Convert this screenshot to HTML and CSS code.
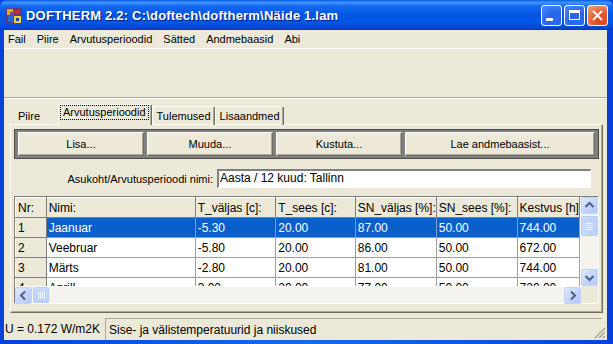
FILE: index.html
```html
<!DOCTYPE html>
<html lang="et">

<head>
    <meta charset="UTF-8">
    <title>DOFTHERM 2.2</title>
    <link rel="stylesheet" href="styles.css">
</head>

<body>
    <div class="window">
        <!-- Pealkirjariba -->
        <div class="titlebar">
            <svg class="app-icon" width="16" height="16" viewBox="0 0 16 16">
                <rect x="0" y="0" width="16" height="16" fill="#5a3a86"/>
                <rect x="1" y="1" width="6" height="6" fill="#d8b020"/>
                <rect x="8" y="2" width="6" height="4" fill="#c03030"/>
                <rect x="2" y="8" width="5" height="6" fill="#2a6ad8"/>
                <rect x="8" y="8" width="7" height="7" fill="#e8d040"/>
                <rect x="10" y="10" width="3" height="3" fill="#2040a0"/>
                <rect x="4" y="4" width="4" height="4" fill="#7a3ab0"/>
            </svg>
            <span class="title">DOFTHERM 2.2: C:\doftech\doftherm\Näide 1.lam</span>
            <div class="caption-buttons">
                <div class="cap-btn">
                    <svg width="21" height="21" viewBox="0 0 21 21"><rect x="5" y="13" width="7" height="3" fill="#fff"/></svg>
                </div>
                <div class="cap-btn">
                    <svg width="21" height="21" viewBox="0 0 21 21"><rect x="5.5" y="5.5" width="10" height="9" fill="none" stroke="#fff"/><rect x="5" y="5" width="11" height="3" fill="#fff"/></svg>
                </div>
                <div class="cap-btn close">
                    <svg width="21" height="21" viewBox="0 0 21 21"><path d="M6 6 L15 15 M15 6 L6 15" stroke="#fff" stroke-width="2"/></svg>
                </div>
            </div>
        </div>

        <div class="client">
            <!-- Menüü -->
            <div class="menubar">
                <span>Fail</span>
                <span>Piire</span>
                <span>Arvutusperioodid</span>
                <span>Sätted</span>
                <span>Andmebaasid</span>
                <span>Abi</span>
            </div>

            <!-- Tööriistariba (tühi) -->
            <div class="toolbar"></div>

            <!-- Vahelehed -->
            <div class="tabs-area">
                <div class="tabs">
                    <div class="tab first">Piire</div>
                    <div class="tab active"><span class="focus">Arvutusperioodid</span></div>
                    <div class="tab">Tulemused</div>
                    <div class="tab">Lisaandmed</div>
                </div>

                <div class="tab-page">
                    <div class="button-panel">
                        <div class="btn w126">Lisa...</div>
                        <div class="btn w126">Muuda...</div>
                        <div class="btn w126">Kustuta...</div>
                        <div class="btn wide">Lae andmebaasist...</div>
                    </div>

                    <div class="name-row">
                        <span class="name-label">Asukoht/Arvutusperioodi nimi:</span>
                        <div class="text-input">Aasta / 12 kuud: Tallinn</div>
                    </div>

                    <div class="grid">
                        <div class="grid-main">
                            <div class="grid-cells">
                                <table>
                                    <tr class="head">
                                        <td class="fixed c-nr">Nr:</td>
                                        <td class="c-name">Nimi:</td>
                                        <td class="c-81">T_väljas [c]:</td>
                                        <td class="c-80">T_sees [c]:</td>
                                        <td class="c-81">SN_väljas [%]:</td>
                                        <td class="c-81">SN_sees [%]:</td>
                                        <td class="c-last">Kestvus [h]</td>
                                    </tr>
                                    <tr class="selected">
                                        <td class="fixed">1</td>
                                        <td>Jaanuar</td>
                                        <td>-5.30</td>
                                        <td>20.00</td>
                                        <td>87.00</td>
                                        <td>50.00</td>
                                        <td>744.00</td>
                                    </tr>
                                    <tr>
                                        <td class="fixed">2</td>
                                        <td>Veebruar</td>
                                        <td>-5.80</td>
                                        <td>20.00</td>
                                        <td>86.00</td>
                                        <td>50.00</td>
                                        <td>672.00</td>
                                    </tr>
                                    <tr>
                                        <td class="fixed">3</td>
                                        <td>Märts</td>
                                        <td>-2.80</td>
                                        <td>20.00</td>
                                        <td>81.00</td>
                                        <td>50.00</td>
                                        <td>744.00</td>
                                    </tr>
                                    <tr>
                                        <td class="fixed">4</td>
                                        <td>Aprill</td>
                                        <td>3.00</td>
                                        <td>20.00</td>
                                        <td>77.00</td>
                                        <td>50.00</td>
                                        <td>720.00</td>
                                    </tr>
                                </table>
                            </div>
                            <div class="vscroll">
                                <div class="sb-btn">
                                    <svg width="17" height="17" viewBox="0 0 17 17"><path d="M4.5 10 L8.5 6 L12.5 10" fill="none" stroke="#4d6185" stroke-width="2"/></svg>
                                </div>
                                <div class="sb-thumb-v">
                                    <svg width="15" height="20" viewBox="0 0 15 20"><path d="M4 7.5h7M4 9.5h7M4 11.5h7M4 13.5h7" stroke="#eef4fe" stroke-width="1"/></svg>
                                </div>
                                <div class="sb-track"></div>
                                <div class="sb-btn">
                                    <svg width="17" height="17" viewBox="0 0 17 17"><path d="M4.5 7 L8.5 11 L12.5 7" fill="none" stroke="#4d6185" stroke-width="2"/></svg>
                                </div>
                            </div>
                        </div>
                        <div class="hscroll-row">
                            <div class="hscroll">
                                <div class="sb-btn">
                                    <svg width="17" height="17" viewBox="0 0 17 17"><path d="M10 4.5 L6 8.5 L10 12.5" fill="none" stroke="#4d6185" stroke-width="2"/></svg>
                                </div>
                                <div class="sb-thumb-h">
                                    <svg width="16" height="15" viewBox="0 0 16 15"><path d="M5.5 4v7M7.5 4v7M9.5 4v7M11.5 4v7" stroke="#eef4fe" stroke-width="1"/></svg>
                                </div>
                                <div class="sb-track"></div>
                                <div class="sb-btn">
                                    <svg width="17" height="17" viewBox="0 0 17 17"><path d="M7 4.5 L11 8.5 L7 12.5" fill="none" stroke="#4d6185" stroke-width="2"/></svg>
                                </div>
                            </div>
                            <div class="sb-corner"></div>
                        </div>
                    </div>
                </div>
            </div>

            <!-- Olekuriba -->
            <div class="statusbar">
                <div class="panel p1">U = 0.172 W/m2K</div>
                <div class="panel p2">Sise- ja välistemperatuurid ja niiskused</div>
                <svg class="grip" width="12" height="12" viewBox="0 0 12 12">
                    <path d="M11 1 L1 11 M11 5 L5 11 M11 9 L9 11" stroke="#aca899" stroke-width="1.5"/>
                </svg>
            </div>
        </div>
    </div>
</body>

</html>
```

FILE: styles.css
```css
/* Üldine */
body {
    margin: 0;
    width: 613px;
    height: 344px;
    overflow: hidden;
    font-family: "Liberation Sans", Arial, sans-serif;
    font-size: 11px;
    color: #000;
    background: #0831d9;
}

.window {
    display: flex;
    flex-direction: column;
    height: 344px;
    background: linear-gradient(to right, #0841d9, #166aee 50%, #0841d9);
}

/* Pealkirjariba */
.titlebar {
    height: 30px;
    display: flex;
    align-items: center;
    padding: 0 5px 0 6px;
    background: linear-gradient(to bottom, #0a5fe6 0%, #3e95ff 9%, #1569f0 20%, #0458e6 45%, #0355e3 75%, #0348d0 92%, #0237b8 100%);
    border-radius: 7px 7px 0 0;
}

.app-icon {
    flex: none;
    margin-top: 1px;
}

.title {
    margin-left: 4px;
    font-weight: bold;
    font-size: 13px;
    letter-spacing: 0.2px;
    color: #fff;
    text-shadow: 1px 1px 0 #0a1d7e;
    white-space: nowrap;
}

.caption-buttons {
    margin-left: auto;
    display: flex;
    gap: 2px;
    margin-top: 1px;
}

.cap-btn {
    width: 21px;
    height: 21px;
    box-sizing: border-box;
    border: 1px solid #fff;
    border-radius: 3px;
    background: radial-gradient(circle at 70% 80%, #2a6ef5 0%, #2663e8 40%, #4b8cff 100%);
    display: flex;
    align-items: center;
    justify-content: center;
}

.cap-btn svg {
    margin: -1px;
}

.cap-btn.close {
    background: radial-gradient(circle at 70% 80%, #d6451d 0%, #e0602f 45%, #f3a78a 100%);
}

/* Kliendiala */
.client {
    flex: 1;
    display: flex;
    flex-direction: column;
    margin: 0 6px 4px 4px;
    background: #ece9d8;
}

.menubar {
    height: 18px;
    display: flex;
    align-items: center;
    gap: 11px;
    padding-left: 4px;
}

.toolbar {
    height: 48px;
    border-top: 1px solid #fff;
    border-bottom: 1px solid #aca899;
    box-shadow: 0 1px 0 #fff;
}

/* Vahelehed */
.tabs-area {
    flex: 1;
    padding: 5px 4px 3px 6px;
    display: flex;
    flex-direction: column;
}

.tabs {
    display: flex;
    align-items: flex-end;
    height: 21px;
    padding-left: 2px;
}

.tab {
    height: 18px;
    padding: 0 3px 0 4px;
    display: flex;
    align-items: center;
    border-top: 1px solid #fff;
    border-left: 1px solid #fff;
    border-right: 1px solid #716f64;
    box-shadow: inset -1px 0 0 #aca899;
    border-radius: 2px 2px 0 0;
    margin-bottom: -1px;
    z-index: 1;
}

.tab.first {
    border-top-color: #ece9d8;
    border-left-color: #ece9d8;
    border-right-color: #ece9d8;
    box-shadow: none;
    width: 34px;
    padding-left: 5px;
}

.tab.active {
    height: 20px;
    margin: 0 0 -1px 2px;
    padding: 0 3px 0 2px;
    align-items: flex-start;
    background: #ece9d8;
}

.focus {
    margin-top: 1px;
    padding: 0 2px 1px 2px;
    outline: 1px dotted #000;
}

.tab-page {
    flex: 1;
    border-top: 1px solid #fff;
    border-left: 1px solid #fff;
    border-right: 1px solid #716f64;
    border-bottom: 1px solid #716f64;
    box-shadow: inset -1px -1px 0 #aca899;
    padding: 4px 4px 0 3px;
}

/* Nuppude paneel */
.button-panel {
    display: flex;
    gap: 3px;
    background: #808080;
    border: 1px solid #4a4a4a;
    padding: 2px 3px;
    width: 577px;
}

.btn {
    height: 24px;
    box-sizing: border-box;
    display: flex;
    align-items: center;
    justify-content: center;
    background: #ece9d8;
    border-top: 1px solid #fff;
    border-left: 1px solid #fff;
    border-right: 1px solid #716f64;
    border-bottom: 1px solid #716f64;
    box-shadow: inset -1px -1px 0 #aca899;
}

.w126 {
    width: 126px;
}

.wide {
    flex: 1;
}

/* Nime rida */
.name-row {
    display: flex;
    align-items: center;
    margin-top: 10px;
    height: 19px;
}

.name-label {
    width: 199px;
    text-align: right;
    padding-right: 4px;
}

.text-input {
    width: 374px;
    height: 19px;
    box-sizing: border-box;
    background: #fff;
    border-top: 2px solid #808080;
    border-left: 2px solid #808080;
    border-right: 1px solid #fff;
    border-bottom: 1px solid #fff;
    padding-left: 1px;
    font-size: 12px;
    line-height: 15px;
}

/* Tabel */
.grid {
    margin-top: 8px;
    width: 583px;
    border-top: 1px solid #808080;
    border-left: 1px solid #808080;
    border-right: 1px solid #fff;
    border-bottom: 1px solid #fff;
    background: #ece9d8;
}

.grid-main {
    display: flex;
    height: 89px;
}

.grid-cells {
    flex: 1;
    overflow: hidden;
    background: #fff;
}

table {
    border-collapse: collapse;
    table-layout: fixed;
    font-size: 12px;
}

td {
    height: 20px;
    padding: 0 0 0 2px;
    border-right: 1px solid #a0a0a0;
    border-bottom: 1px solid #a0a0a0;
    white-space: nowrap;
    overflow: hidden;
    box-sizing: border-box;
}

.c-nr {
    width: 31px;
}

.c-name {
    width: 152px;
}

.c-81 {
    width: 81px;
}

.c-80 {
    width: 80px;
}

.c-last {
    width: 58px;
}

.head td,
td.fixed {
    background: #ece9d8;
    border-top: 1px solid #fff;
    border-left: 1px solid #fff;
    border-right: 1px solid #808080;
    border-bottom: 1px solid #808080;
}

.selected td {
    background: #0b5fcb;
    color: #fff;
    border-right-color: #7e9ed8;
    border-bottom-color: #7e9ed8;
}

.selected td.fixed {
    background: #ece9d8;
    color: #000;
    border-right-color: #808080;
    border-bottom-color: #808080;
}

/* Kerimisribad */
.vscroll {
    width: 17px;
    display: flex;
    flex-direction: column;
    background: #f4f3ee;
    border-left: 1px solid #fff;
}

.hscroll-row {
    display: flex;
    height: 17px;
}

.hscroll {
    flex: 1;
    display: flex;
    background: #f4f3ee;
    border-top: 1px solid #fff;
}

.sb-track {
    flex: 1;
}

.sb-btn {
    width: 17px;
    height: 17px;
    flex: none;
    box-sizing: border-box;
    border: 1px solid #c3d3fd;
    border-radius: 2px;
    background: linear-gradient(135deg, #e1eafe, #c1d3fb 60%, #b4c8f6);
    display: flex;
    align-items: center;
    justify-content: center;
}

.sb-btn svg {
    margin: -1px;
}

.sb-thumb-v {
    height: 20px;
    margin-top: 2px;
    box-sizing: border-box;
    border: 1px solid #b8cdf6;
    border-radius: 2px;
    background: linear-gradient(to right, #cadafc, #bccffa);
}

.sb-thumb-v svg {
    display: block;
    margin-top: -1px;
}

.sb-thumb-h {
    width: 16px;
    margin-left: 1px;
    box-sizing: border-box;
    border: 1px solid #b8cdf6;
    border-radius: 2px;
    background: linear-gradient(to bottom, #cadafc, #bccffa);
}

.sb-thumb-h svg {
    display: block;
    margin-left: -1px;
}

.sb-corner {
    width: 17px;
    background: #ece9d8;
}

/* Olekuriba */
.statusbar {
    height: 24px;
    display: flex;
    align-items: stretch;
    padding-top: 2px;
    box-sizing: border-box;
    position: relative;
    font-size: 12px;
}

.panel {
    display: flex;
    align-items: center;
    padding-left: 1px;
}

.p1 {
    width: 100px;
}

.p2 {
    flex: 1;
    margin-right: 5px;
    padding-left: 3px;
    border-top: 1px solid #aca899;
    border-left: 1px solid #aca899;
}

.grip {
    position: absolute;
    right: 1px;
    bottom: 1px;
}
```
